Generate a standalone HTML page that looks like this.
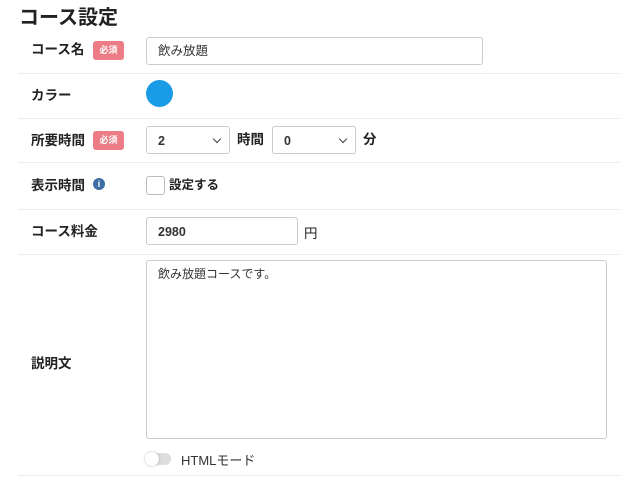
<!DOCTYPE html>
<html><head><meta charset="utf-8"><style>
*{box-sizing:border-box;margin:0;padding:0}
body{width:640px;height:491px;background:#fff;font-family:"Liberation Sans","Noto Sans CJK JP",sans-serif;color:#222;position:relative;overflow:hidden}
.a{position:absolute}
h1{position:absolute;left:19px;top:4px;font-size:20px;font-weight:bold;line-height:28px}
.lbl{position:absolute;left:31px;font-size:13.5px;font-weight:bold;line-height:20px}
.hr{position:absolute;left:18px;width:602px;height:1px;background:#ececec}
.badge{position:absolute;left:93px;width:31px;height:19px;background:#ec7d86;color:#fff;font-size:9px;font-weight:bold;text-align:center;line-height:19px;border-radius:3px}
.box{position:absolute;border:1px solid #ccc;border-radius:3px;background:#fff;font-size:12.5px;padding-left:11px;color:#333}
.sel::after{content:"";position:absolute;right:9px;top:9px;width:5px;height:5px;border-right:1.5px solid #444;border-bottom:1.5px solid #444;transform:rotate(45deg)}
.t{position:absolute;font-size:13.5px;font-weight:bold;line-height:20px}
</style></head><body>
<h1>コース設定</h1>

<div class="lbl" style="top:40px">コース名</div>
<div class="badge" style="top:41px">必須</div>
<div class="box" style="left:146px;top:37px;width:337px;height:28px;line-height:26px">飲み放題</div>
<div class="hr" style="top:73px"></div>

<div class="lbl" style="top:86px">カラー</div>
<div class="a" style="left:146px;top:80px;width:27px;height:27px;border-radius:50%;background:#1a9be6"></div>
<div class="hr" style="top:118px"></div>

<div class="lbl" style="top:131px">所要時間</div>
<div class="badge" style="top:131px">必須</div>
<div class="box sel" style="left:146px;top:126px;width:84px;height:28px;line-height:28px;font-weight:bold">2</div>
<div class="t" style="left:237px;top:130px">時間</div>
<div class="box sel" style="left:272px;top:126px;width:84px;height:28px;line-height:28px;font-weight:bold">0</div>
<div class="t" style="left:363px;top:130px">分</div>
<div class="hr" style="top:162px"></div>

<div class="lbl" style="top:176px">表示時間</div>
<div class="a" style="left:93px;top:178px;width:12px;height:12px;border-radius:50%;background:#3d6ea3;color:#fff;font-size:9px;font-weight:bold;text-align:center;line-height:12px">i</div>
<div class="a" style="left:146px;top:176px;width:19px;height:19px;border:1px solid #bbb;border-radius:3px"></div>
<div class="t" style="left:169px;top:175px;font-size:12.5px">設定する</div>
<div class="hr" style="top:209px"></div>

<div class="lbl" style="top:222px">コース料金</div>
<div class="box" style="left:146px;top:217px;width:152px;height:28px;line-height:28px;font-weight:bold">2980</div>
<div class="a" style="left:304px;top:222px;font-size:13.5px">円</div>
<div class="hr" style="top:254px"></div>

<div class="lbl" style="top:354px">説明文</div>
<div class="box" style="left:146px;top:260px;width:461px;height:179px;padding:4px 0 0 11px;font-size:12px">飲み放題コースです。</div>
<div class="a" style="left:146px;top:453px;width:25px;height:12px;border-radius:6px;background:#ddd"></div>
<div class="a" style="left:145px;top:452px;width:14px;height:14px;border-radius:50%;background:#fff;box-shadow:0 0 2px rgba(0,0,0,.3)"></div>
<div class="a" style="left:181px;top:450px;font-size:13px;color:#333">HTMLモード</div>
<div class="hr" style="top:475px"></div>
</body></html>
